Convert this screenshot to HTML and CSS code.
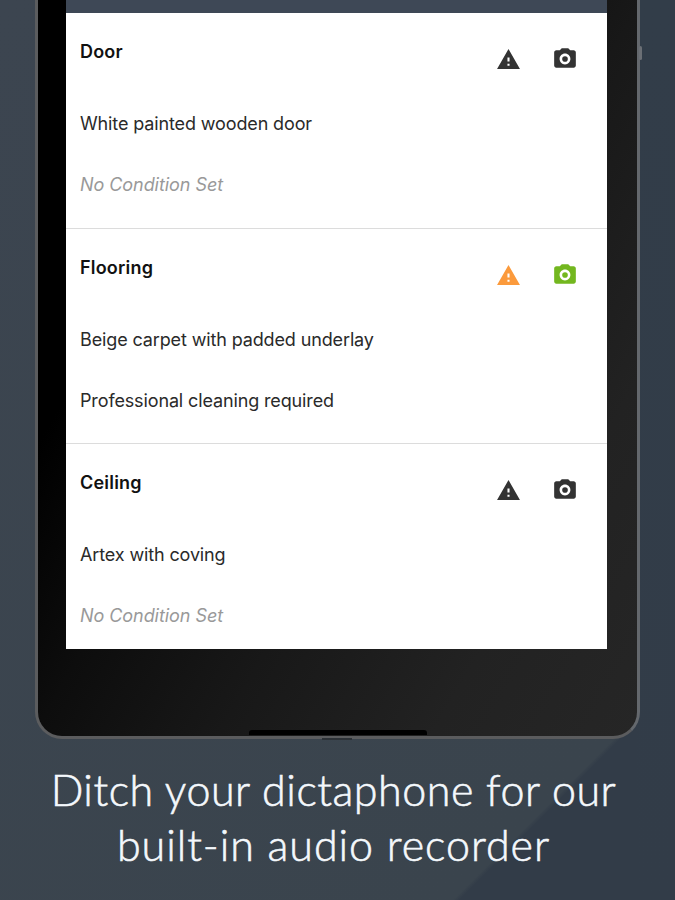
FILE: index.html
```
<!DOCTYPE html>
<html>

<head>
    <meta charset="utf-8">
    <meta name="viewport" content="width=device-width, initial-scale=1">
    <title>Audio recorder</title>
    <link rel="stylesheet" href="styles.css">
</head>

<body>

    <svg class="symbols">
        <symbol id="warning" viewBox="0 0 24 24">
            <path d="M1 21h22L12 2 1 21zm12-3h-2v-2h2v2zm0-4h-2v-4h2v4z" />
        </symbol>
        <symbol id="camera" viewBox="0 0 24 24">
            <circle cx="12" cy="12" r="2.6" />
            <path d="M9 2L7.17 4H4c-1.1 0-2 .9-2 2v12c0 1.1.9 2 2 2h16c1.1 0 2-.9 2-2V6c0-1.1-.9-2-2-2h-3.17L15 2H9zm3 15c-2.76 0-5-2.24-5-5s2.24-5 5-5 5 2.24 5 5-2.24 5-5 5z" />
        </symbol>
    </svg>

    <div class="page">
        <div class="tablet">
            <div class="side-button"></div>
            <div class="screen">
                <div class="item">
                    <div class="item-head">
                        <h2>Door</h2>
                        <svg class="icon"><use href="#warning" /></svg>
                        <svg class="icon cam"><use href="#camera" /></svg>
                    </div>
                    <p class="desc">White painted wooden door</p>
                    <p class="cond empty">No Condition Set</p>
                </div>
                <div class="item">
                    <div class="item-head">
                        <h2>Flooring</h2>
                        <svg class="icon orange"><use href="#warning" /></svg>
                        <svg class="icon cam green"><use href="#camera" /></svg>
                    </div>
                    <p class="desc">Beige carpet with padded underlay</p>
                    <p class="cond">Professional cleaning required</p>
                </div>
                <div class="item">
                    <div class="item-head">
                        <h2>Ceiling</h2>
                        <svg class="icon"><use href="#warning" /></svg>
                        <svg class="icon cam"><use href="#camera" /></svg>
                    </div>
                    <p class="desc">Artex with coving</p>
                    <p class="cond empty">No Condition Set</p>
                </div>
            </div>
            <div class="speaker"></div>
            <div class="port"></div>
        </div>

        <div class="caption">
            <div class="line1">Ditch your dictaphone for our</div>
            <div class="line2">built-in audio recorder</div>
        </div>
    </div>

</body>

</html>
```
FILE: styles.css
```
* {
    box-sizing: border-box;
}

body {
    margin: 0;
    font-family: Inter, "Liberation Sans", sans-serif;
}

.symbols {
    display: none;
}

/* dark strip down the right side, then the diagonal in the corner */
.page {
    width: 675px;
    height: 900px;
    overflow: hidden;
    background:
        linear-gradient(#323d49, #323c48) right top / 38px 100% no-repeat,
        linear-gradient(135deg, #3c4550 0%, #3a444d 85.9%, #323c48 86.3%, #323c48 100%);
}

.tablet {
    position: relative;
    width: 605px;
    height: 739px;
    margin-left: 35px;
    padding: 0 30px 0 28px;
    border: 3px solid #5b5c5e;
    border-right-color: #64686d;
    border-top: none;
    border-radius: 0 0 27px 27px;
    background: linear-gradient(120deg, #000 0%, #000 25%, #0d0d0d 41%, #181818 59%, #222 80%, #262626 100%);
}

.screen {
    height: 649px;
    border-top: 13px solid #3e4856;
    background: #fff;
    overflow: hidden;
}

.side-button {
    position: absolute;
    right: -5px;
    top: 46px;
    width: 3px;
    height: 14px;
    border-radius: 2px;
    background: #6b6f75;
}

.item {
    height: 215.5px;
    padding: 0 29px 0 14px;
    border-bottom: 1px solid #dcdcdc;
}

.item:last-child {
    border-bottom: none;
}

.item-head {
    display: flex;
    height: 97px;
    padding-top: 26px;
}

h2 {
    flex: 1;
    margin: 0;
    font-size: 18px;
    font-weight: 600;
    line-height: 25px;
    letter-spacing: 0.2px;
    color: #111;
}

.icon {
    width: 25px;
    height: 25px;
    margin-top: 8px;
    fill: #333;
}

.cam {
    width: 26px;
    height: 26px;
    margin-top: 7px;
    margin-left: 31.5px;
}

.orange {
    fill: #fb9a3c;
}

.green {
    fill: #73b71f;
}

.desc,
.cond {
    margin: 0;
    font-size: 18px;
    line-height: 27px;
    letter-spacing: -0.13px;
    color: #2a2a2a;
    white-space: nowrap;
}

.cond {
    margin-top: 34px;
}

.empty {
    font-style: italic;
    letter-spacing: -0.06px;
    color: #999;
}

.speaker {
    position: absolute;
    left: 211px;
    bottom: 1px;
    width: 178px;
    height: 5px;
    border-radius: 3px 3px 0 0;
    background: #000;
}

.port {
    position: absolute;
    left: 284px;
    bottom: -4px;
    width: 30px;
    height: 2px;
    background: #2c3136;
}

.caption {
    padding-top: 23px;
    padding-right: 8px;
    text-align: center;
    font-family: Lato, "Open Sans", sans-serif;
    font-weight: 300;
    font-size: 43px;
    line-height: 55px;
    color: #f4f8fc;
    -webkit-text-stroke: 0.6px #f4f8fc;
    white-space: nowrap;
}

.line1 {
    letter-spacing: 0.53px;
}

.line2 {
    letter-spacing: 0.97px;
}
```
